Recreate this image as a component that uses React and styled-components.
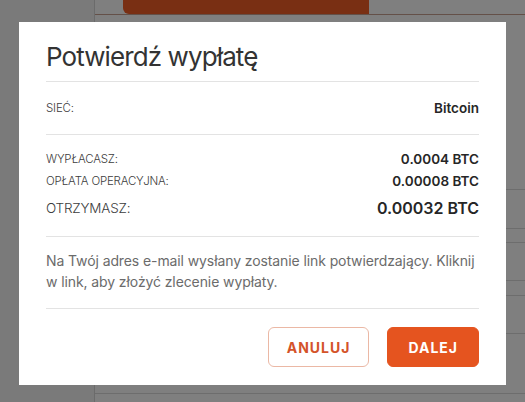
import styled, { createGlobalStyle } from "styled-components";

const GlobalStyle = createGlobalStyle`
  html, body {
    margin: 0;
    padding: 0;
    background: #ffffff;
  }
  body {
    font-family: Inter, "Noto Sans", "Liberation Sans", sans-serif;
  }
  * {
    box-sizing: border-box;
  }
`;

/* page that sits behind the backdrop */
const Page = styled.div`
  width: 525px;
  height: 402px;
  overflow: hidden;
  display: grid;
  grid-template-columns: 95px 1fr;
`;

const Sidebar = styled.aside`
  background: #f4f4f4;
  border-right: 1px solid #d6d6d6;
`;

const Main = styled.main`
  display: flex;
  flex-direction: column;
`;

const TopBar = styled.div`
  display: flex;
  align-items: flex-end;
  height: 15px;
  padding-left: 28px;
  border-bottom: 1px solid #c9a090;
`;

const TopButton = styled.div`
  width: 246px;
  height: 15px;
  background: #f25e26;
  border-radius: 0 0 0 6px;
`;

const Table = styled.div`
  margin-top: 137px;
  display: flex;
  flex-direction: column;
`;

const TableRow = styled.div`
  height: ${(p) => p.$h}px;
  border-bottom: 1px solid #dadada;
`;

const Panel = styled.div`
  margin-top: auto;
  height: 18px;
  border-bottom: 1px solid #dadada;
  margin-bottom: 8px;
`;

/* modal */
const Backdrop = styled.div`
  position: fixed;
  inset: 0;
  background: rgba(0, 0, 0, 0.5);
  display: flex;
  justify-content: center;
  align-items: flex-start;
  padding-top: 22px;
`;

const ModalView = styled.div.attrs(() => ({ role: "dialog" }))`
  width: 487px;
  background: #ffffff;
  padding: 0 27px;
  display: flex;
  flex-direction: column;
`;

const Section = styled.div`
  border-bottom: ${(p) => (p.$last ? "none" : "1px solid #e3e3e3")};
  padding: ${(p) => p.$pad};
`;

const Title = styled.h2`
  margin: 0;
  font-size: 26px;
  line-height: 34px;
  font-weight: 400;
  color: #333333;
  letter-spacing: -0.9px;
`;

const Row = styled.div`
  display: flex;
  justify-content: space-between;
  align-items: center;
  height: ${(p) => p.$h || 22}px;
`;

const Label = styled.span`
  font-size: ${(p) => (p.$big ? 13.5 : 11.5)}px;
  font-weight: 300;
  color: #3c3c3c;
  text-transform: uppercase;
  letter-spacing: -0.2px;
`;

const Value = styled.span`
  font-size: ${(p) => (p.$big ? 16 : 13.5)}px;
  font-weight: 600;
  color: #262626;
`;

const Note = styled.p`
  margin: 0;
  font-size: 14px;
  line-height: 21px;
  color: #6b6b6b;
  letter-spacing: -0.1px;
`;

const Actions = styled.div`
  display: flex;
  justify-content: flex-end;
  gap: 18px;
`;

const Button = styled.button`
  height: 40px;
  padding: 0 ${(p) => (p.$primary ? 20 : 18)}px;
  border-radius: 6px;
  font-family: inherit;
  font-size: 14px;
  font-weight: 700;
  letter-spacing: 1px;
  cursor: pointer;
  border: 1px solid ${(p) => (p.$primary ? "#e5541f" : "#ebb8a5")};
  background: ${(p) => (p.$primary ? "#e5541f" : "#ffffff")};
  color: ${(p) => (p.$primary ? "#ffffff" : "#d4532a")};
`;

const rows = [38, 39, 14, 38, 15, 38];

export default function App() {
  return (
    <>
      <GlobalStyle />
      <Page>
        <Sidebar />
        <Main>
          <TopBar>
            <TopButton />
          </TopBar>
          <Table>
            {rows.map((h, i) => (
              <TableRow key={i} $h={h} />
            ))}
          </Table>
          <Panel />
        </Main>
      </Page>
      <Backdrop>
        <ModalView>
          <Section $pad="18px 0 7px">
            <Title>Potwierdź wypłatę</Title>
          </Section>
          <Section $pad="15px 0">
            <Row>
              <Label>Sieć:</Label>
              <Value>Bitcoin</Value>
            </Row>
          </Section>
          <Section $pad="13px 0 12px">
            <Row>
              <Label>Wypłacasz:</Label>
              <Value>0.0004 BTC</Value>
            </Row>
            <Row>
              <Label>Opłata operacyjna:</Label>
              <Value>0.00008 BTC</Value>
            </Row>
            <Row $h={32}>
              <Label $big>Otrzymasz:</Label>
              <Value $big>0.00032 BTC</Value>
            </Row>
          </Section>
          <Section $pad="13px 0 16px">
            <Note>
              Na Twój adres e-mail wysłany zostanie link potwierdzający. Kliknij
              w link, aby złożyć zlecenie wypłaty.
            </Note>
          </Section>
          <Section $last $pad="18px 0 18px">
            <Actions>
              <Button>ANULUJ</Button>
              <Button $primary>DALEJ</Button>
            </Actions>
          </Section>
        </ModalView>
      </Backdrop>
    </>
  );
}
